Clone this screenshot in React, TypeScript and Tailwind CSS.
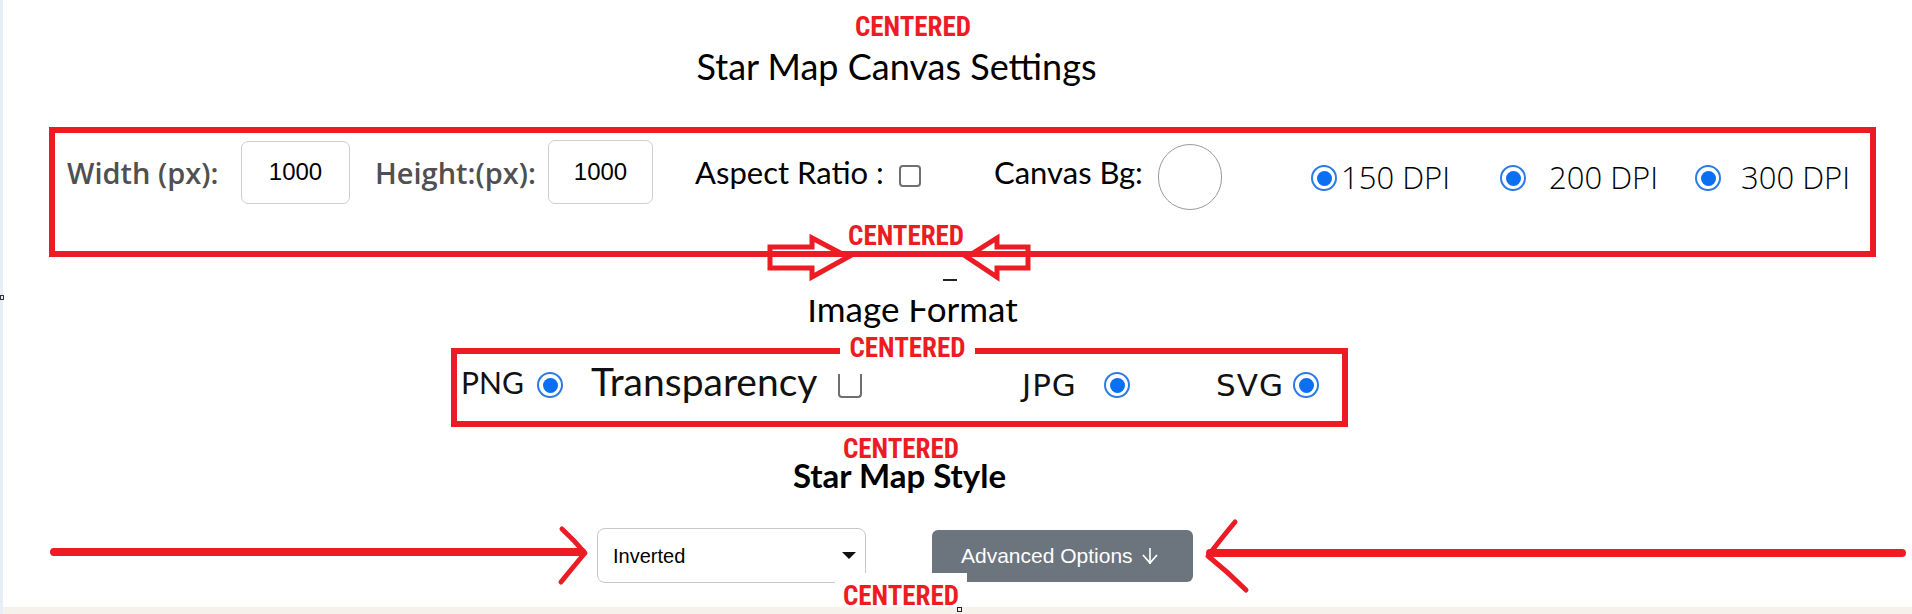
import React from 'react'

// petits composants réutilisés
function Radio({ className = '' }: { className?: string }) {
  return (
    <span
      className={`inline-flex h-[26px] w-[26px] shrink-0 items-center justify-center rounded-full border-[2px] border-[#2a7be6] bg-white ${className}`}
    >
      <span className="h-[15px] w-[15px] rounded-full bg-[#0a6ff2]" />
    </span>
  )
}

function Tag({ className = '' }: { className?: string }) {
  return (
    <div
      className={`font-['Liberation_Sans_Narrow','Arial_Narrow','Roboto_Condensed',sans-serif] text-[27px] font-bold leading-[20px] text-[#ed1c24] ${className}`}
    >
      CENTERED
    </div>
  )
}

function Annotations() {
  return (
    <svg
      className="pointer-events-none absolute left-0 top-0 h-[614px] w-[1912px]"
      viewBox="0 0 1912 614"
      fill="none"
    >
      {/* flèches creuses autour du label du premier cadre */}
      <path
        d="M770 247 L812 247 L812 238 L848 257 L812 277 L812 268 L770 268 Z"
        stroke="#ed1c24"
        strokeWidth="5"
      />
      <path
        d="M1028 247 L997 247 L997 238 L967 257 L997 277 L997 268 L1028 268 Z"
        stroke="#ed1c24"
        strokeWidth="5"
      />
      {/* flèche gauche en bas */}
      <path d="M54 552 L582 552" stroke="#ed1c24" strokeWidth="8" strokeLinecap="round" />
      <path
        d="M562 529 Q574 540 585 553 Q574 566 561 582"
        stroke="#ed1c24"
        strokeWidth="5"
        strokeLinecap="round"
        strokeLinejoin="round"
      />
      {/* flèche droite en bas */}
      <path d="M1210 553 L1902 553" stroke="#ed1c24" strokeWidth="8" strokeLinecap="round" />
      <path
        d="M1235 522 Q1220 540 1208 556 Q1228 572 1246 590"
        stroke="#ed1c24"
        strokeWidth="5"
        strokeLinecap="round"
        strokeLinejoin="round"
      />
    </svg>
  )
}

export default function App() {
  return (
    <div className="relative h-[614px] w-full overflow-hidden bg-white">
      <div className="flex flex-col items-start pt-[17px]">
        <Tag className="w-[1826px] text-center" />

        <h1 className="mt-[11px] w-[1793px] text-center font-['Lato',sans-serif] text-[36px] font-normal leading-none text-black">
          Star Map Canvas Settings
        </h1>

        {/* Cadre 1 : dimensions, fond, DPI */}
        <section className="ml-[49px] mt-[43px] box-border h-[130px] w-[1827px] border-[6px] border-[#ed1c24]">
          <div className="mt-[7px] flex h-[64px] items-center pl-[12px]">
            <span className="w-[153px] whitespace-nowrap font-['Open_Sans',sans-serif] text-[29px] font-semibold leading-none text-[#505050]">
              Width (px):
            </span>
            <div className="ml-[21px] flex h-[63px] w-[109px] items-center justify-center rounded-[7px] border border-[#cfcfcf] font-['Liberation_Sans',Arial,sans-serif] text-[24px] text-black">
              1000
            </div>
            <span className="ml-[25px] w-[158px] whitespace-nowrap font-['Open_Sans',sans-serif] text-[29px] font-semibold leading-none text-[#505050]">
              Height:(px):
            </span>
            <div className="ml-[15px] flex h-[64px] w-[105px] items-center justify-center rounded-[7px] border border-[#cfcfcf] font-['Liberation_Sans',Arial,sans-serif] text-[24px] text-black">
              1000
            </div>
            <span className="ml-[42px] w-[189px] whitespace-nowrap font-['Lato',sans-serif] text-[31px] leading-none text-black">
              Aspect Ratio :
            </span>
            <span className="ml-[15px] mt-[8px] h-[22px] w-[22px] shrink-0 rounded-[4px] border-[2px] border-[#6f6f6f] bg-white" />
            <span className="ml-[73px] w-[146px] whitespace-nowrap font-['Lato',sans-serif] text-[31px] leading-none text-black">
              Canvas Bg:
            </span>
            <span className="ml-[18px] mt-[10px] h-[66px] w-[64px] shrink-0 rounded-full border-[1.5px] border-[#9a9a9a] bg-white" />
            <Radio className="ml-[89px] mt-[12px]" />
            <span className="ml-[4px] mt-[10px] w-[113px] whitespace-nowrap font-['Open_Sans',sans-serif] text-[31px] font-light leading-none text-black">
              150 DPI
            </span>
            <Radio className="ml-[46px] mt-[12px]" />
            <span className="ml-[23px] mt-[10px] w-[106px] whitespace-nowrap font-['Open_Sans',sans-serif] text-[31px] font-light leading-none text-black">
              200 DPI
            </span>
            <Radio className="ml-[40px] mt-[12px]" />
            <span className="ml-[20px] mt-[10px] w-[106px] whitespace-nowrap font-['Open_Sans',sans-serif] text-[31px] font-light leading-none text-black">
              300 DPI
            </span>
          </div>
          <Tag className="ml-[793px] mt-[22px] w-[115px] text-center" />
        </section>

        {/* titre rogné par le haut comme sur la capture */}
        <div className="mt-[43px] h-[30px] w-[1825px] overflow-hidden">
          <h2 className="-mt-[9px] text-center font-['Lato',sans-serif] text-[35px] font-normal leading-none text-black">
            Image Format
          </h2>
        </div>

        {/* Cadre 2 : format d'image */}
        <section className="relative ml-[451px] mt-[18px] box-border h-[79px] w-[897px] border-[6px] border-[#ed1c24]">
          <div className="flex h-[62px] items-center pl-[4px]">
            <span className="-mt-[6px] w-[61px] whitespace-nowrap font-['Lato',sans-serif] text-[30px] leading-none text-[#111]">
              PNG
            </span>
            <Radio className="ml-[15px]" />
            <span className="-mt-[7px] ml-[28px] w-[229px] whitespace-nowrap font-['Lato',sans-serif] text-[39px] leading-none text-[#111]">
              Transparency
            </span>
            <span className="ml-[18px] mt-[2px] h-[24px] w-[24px] shrink-0 rounded-b-[4px] border-x-[2px] border-b-[2px] border-[#6f6f6f]" />
            <span className="ml-[160px] w-[60px] whitespace-nowrap font-['DejaVu_Sans',sans-serif] text-[31px] leading-none tracking-[1px] text-[#111]">
              JPG
            </span>
            <Radio className="ml-[22px]" />
            <span className="ml-[86px] w-[61px] whitespace-nowrap font-['DejaVu_Sans',sans-serif] text-[31px] leading-none tracking-[1px] text-[#111]">
              SVG
            </span>
            <Radio className="ml-[16px]" />
          </div>
          <div className="absolute -top-[16px] left-[383px] w-[135px] bg-white text-center">
            <Tag />
          </div>
        </section>

        <Tag className="mt-[12px] w-[1802px] text-center" />

        <h2 className="w-[1799px] text-center font-['Lato',sans-serif] text-[33px] font-bold leading-none text-black">
          Star Map Style
        </h2>

        {/* style + options avancées */}
        <div className="ml-[597px] mt-[36px] flex items-start">
          <div className="box-border flex h-[55px] w-[269px] items-center justify-between rounded-[8px] border border-[#c8c8c8] bg-white pl-[15px] pr-[9px] font-['Liberation_Sans',Arial,sans-serif] text-[20px] text-black">
            <span>Inverted</span>
            <svg width="14" height="7" viewBox="0 0 14 7">
              <path d="M0 0 L14 0 L7 7 Z" fill="#111" />
            </svg>
          </div>
          <button className="ml-[66px] mt-[2px] flex h-[52px] w-[261px] items-center rounded-[6px] bg-[#6c757d] pl-[29px] font-['Liberation_Sans',Arial,sans-serif] text-[21px] text-white">
            <span>Advanced Options</span>
            <svg className="ml-[8px]" width="18" height="18" viewBox="0 0 18 18" fill="none">
              <path d="M9 1 L9 17" stroke="#fff" strokeWidth="1.6" />
              <path d="M2 8 L9 16 L16 8" stroke="#fff" strokeWidth="1.8" strokeLinejoin="round" />
            </svg>
          </button>
        </div>

        <div className="relative ml-[835px] -mt-[10px] h-[34px] w-[132px] bg-white pt-[13px]">
          <Tag className="text-center" />
        </div>

        <div className="h-[10px] w-[1912px] bg-[#f6f1eb]" />
      </div>

      <Annotations />

      {/* détails de la capture */}
      <div className="absolute left-0 top-0 h-[614px] w-[3px] bg-[#e7eef5]" />
      <div className="absolute left-0 top-[295px] h-[5px] w-[4px] border border-[#333]" />
      <div className="absolute left-[957px] top-[607px] h-[5px] w-[5px] border border-[#222]" />
      <div className="absolute left-[943px] top-[279px] h-[2px] w-[14px] bg-[#222]" />
    </div>
  )
}
